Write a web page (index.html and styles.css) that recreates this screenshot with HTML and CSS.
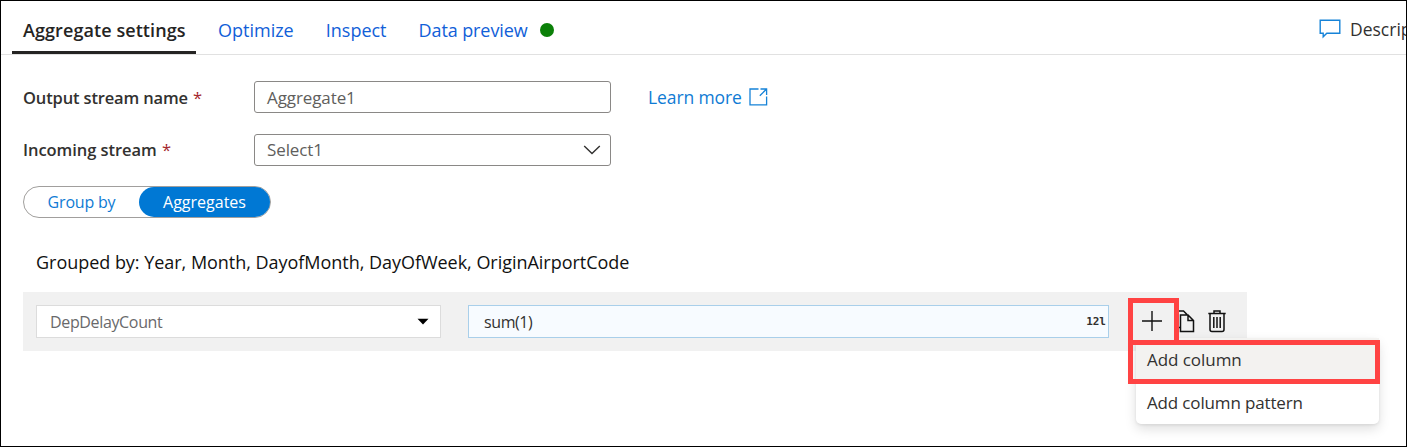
FILE: index.html
```html
<!DOCTYPE html>
<html lang="en">
<head>
<meta charset="utf-8">
<title>Aggregate settings</title>
<link rel="stylesheet" href="styles.css">
</head>
<body>
<main class="panel">
  <header class="tabs">
    <nav class="tab-list">
      <a class="tab active">Aggregate settings</a>
      <a class="tab">Optimize</a>
      <a class="tab">Inspect</a>
      <a class="tab preview">Data preview</a>
      <i class="status"></i>
    </nav>
    <div class="description">
      <svg width="22" height="20" viewBox="0 0 22 20"><path d="M1.2 1.2H20.8V14.3H7.8L4.2 17.8V14.3H1.2Z" fill="none" stroke="#1683d8" stroke-width="1.4"/></svg>
      <span>Descrip</span>
    </div>
  </header>
  <section class="form">
    <div class="row">
      <label class="label">Output stream name <b>*</b></label>
      <div class="field">Aggregate1</div>
      <a class="learn"><span>Learn more</span>
        <svg width="19" height="18" viewBox="0 0 19 18" fill="none" stroke="#1683d8" stroke-width="1.3"><path d="M9.5 1H1V16.8H17.6V8.5M11.5 1H17.6V7M17.6 1L10.8 7.7"/></svg>
      </a>
    </div>
    <div class="row">
      <label class="label incoming">Incoming stream <b>*</b></label>
      <div class="field"><span>Select1</span>
        <svg width="18" height="10" viewBox="0 0 18 10" fill="none" stroke="#323130" stroke-width="1.4"><path d="M1.2 1L9 8.6L16.8 1"/></svg>
      </div>
    </div>
    <div class="toggle">
      <span class="option">Group by</span>
      <span class="option on">Aggregates</span>
    </div>
  </section>
  <p class="grouped">Grouped by: Year, Month, DayofMonth, DayOfWeek, OriginAirportCode</p>
  <section class="band">
    <div class="column-name"><span>DepDelayCount</span>
      <svg width="12" height="7" viewBox="0 0 12 7"><path d="M0.5 0.7H11.5L6 6.6Z" fill="#000"/></svg>
    </div>
    <div class="expression"><span>sum(1)</span><span class="type">12l</span></div>
    <div class="actions">
      <svg width="19" height="23" viewBox="0 0 19 23" fill="none" stroke="#111" stroke-width="1.5"><path d="M4 17.5H0.5V1H7.5L11 4.5M4.5 5H12L17.5 10.5V21.5H4.5ZM12 5V10.5H17.5"/></svg>
      <svg width="18" height="23" viewBox="0 0 18 23" fill="none" stroke="#111" stroke-width="1.5"><path d="M0.3 3.5H17.7M6 3.5V1H12V3.5M2 3.5V19.5Q2 21.5 4 21.5H14Q16 21.5 16 19.5V3.5M5.8 7V18M9 7V18M12.2 7V18"/></svg>
    </div>
  </section>
  <div class="menu">
    <div class="item hovered">Add column</div>
    <div class="item">Add column pattern</div>
  </div>
  <div class="callout callout-plus">
    <svg width="20" height="20" viewBox="0 0 20 20"><path d="M0 10H20M10 0V20" stroke="#111" stroke-width="1.4"/></svg>
  </div>
  <div class="callout callout-item"></div>
</main>
</body>
</html>
```
FILE: styles.css
```css
* { box-sizing: border-box; }
body {
  margin: 0;
  font-family: "Open Sans", "Noto Sans", sans-serif;
  color: #323130;
  background: #fff;
}
svg { display: block; flex: none; }
.panel {
  position: relative;
  width: 1407px;
  height: 447px;
  border: 1px solid #000;
  overflow: hidden;
}
.tabs {
  display: flex;
  height: 54px;
  border-bottom: 1.5px solid #e1e1e1;
  font-size: 18px;
  white-space: nowrap;
}
.tab-list { display: flex; gap: 10px; width: 1307px; flex: none; padding-left: 11px; }
.tab {
  height: 53px;
  padding: 0 11px;
  line-height: 58px;
  color: #1160d8;
}
.tab.active {
  width: 184px;
  margin-right: 1px;
  color: #252423;
  font-weight: 600;
  letter-spacing: .08px;
  border-bottom: 3px solid #252423;
}
.tab.preview { letter-spacing: -.1px; }
.status {
  width: 14px;
  height: 14px;
  margin: 22px 0 0 -9px;
  border-radius: 50%;
  background: #0b8008;
}
.description { display: flex; align-items: center; gap: 9px; padding: 3px 0 0 11px; font-size: 17.5px; }
.form { padding: 26px 0 0 22px; }
.row { display: flex; align-items: center; height: 32px; margin-bottom: 20.5px; white-space: nowrap; }
.label { width: 231px; font-size: 16.5px; font-weight: 600; letter-spacing: -.15px; }
.label.incoming { letter-spacing: -.05px; }
.label b { color: #a4262c; font-weight: 400; margin-left: 1px; }
.field {
  display: flex;
  align-items: center;
  justify-content: space-between;
  width: 357px;
  height: 32px;
  padding: 0 9px 0 12px;
  border: 1.5px solid #8a8886;
  border-radius: 3px;
  font-size: 17px;
  letter-spacing: -.1px;
  color: #605e5c;
}
.learn { display: flex; align-items: center; gap: 7px; margin-left: 37px; font-size: 17.5px; letter-spacing: -.1px; color: #0f7bd4; }
.toggle {
  display: flex;
  width: 248px;
  height: 32px;
  border: 1.5px solid #a19f9d;
  border-radius: 17px;
  font-size: 16px;
}
.option { width: 115px; line-height: 31px; text-align: center; color: #0f7bd4; letter-spacing: -.2px; }
.option.on { width: 131px; border-radius: 16px; background: #0078d4; color: #fff; letter-spacing: 0; }
.grouped { margin: 31px 0 0 35px; height: 26px; line-height: 26px; font-size: 18px; letter-spacing: -.03px; color: #111; white-space: nowrap; }
.band {
  display: flex;
  align-items: center;
  width: 1224px;
  height: 59px;
  margin: 17px 0 0 22px;
  padding-left: 13px;
  background: #f1f1f1;
}
.column-name, .expression {
  display: flex;
  align-items: center;
  justify-content: space-between;
  height: 33px;
  background: #fff;
}
.column-name { width: 405px; padding: 0 11px 0 13px; border: 1.5px solid #dcdcdc; font-size: 16px; letter-spacing: -.35px; color: #69696b; }
.expression { width: 641px; margin-left: 27px; padding: 0 2px 0 15px; border: 1.5px solid #a9cfea; background: #f7fbff; font-size: 16px; letter-spacing: -.4px; }
.type { font: bold 11px "DejaVu Sans Mono", monospace; letter-spacing: 0; }
.actions { display: flex; align-items: center; gap: 13px; margin-left: 67px; }
.menu {
  position: absolute;
  left: 1135px;
  top: 337px;
  width: 243px;
  height: 86px;
  background: #fff;
  border-radius: 5px;
  box-shadow: 0 5px 12px rgba(0, 0, 0, .13), 0 1px 3px rgba(0, 0, 0, .08);
  font-size: 17px;
}
.item { height: 43px; padding-left: 11px; line-height: 44px; letter-spacing: -.15px; white-space: nowrap; }
.item.hovered { background: #f3f2f0; letter-spacing: -.05px; }
.callout { position: absolute; border: 5px solid #ff4343; }
.callout-plus { display: flex; left: 1127px; top: 297px; width: 51px; height: 47px; padding: 8px 0 0 9px; background: #f1f1f1; }
.callout-item { left: 1127px; top: 339px; width: 252px; height: 44px; }
```
